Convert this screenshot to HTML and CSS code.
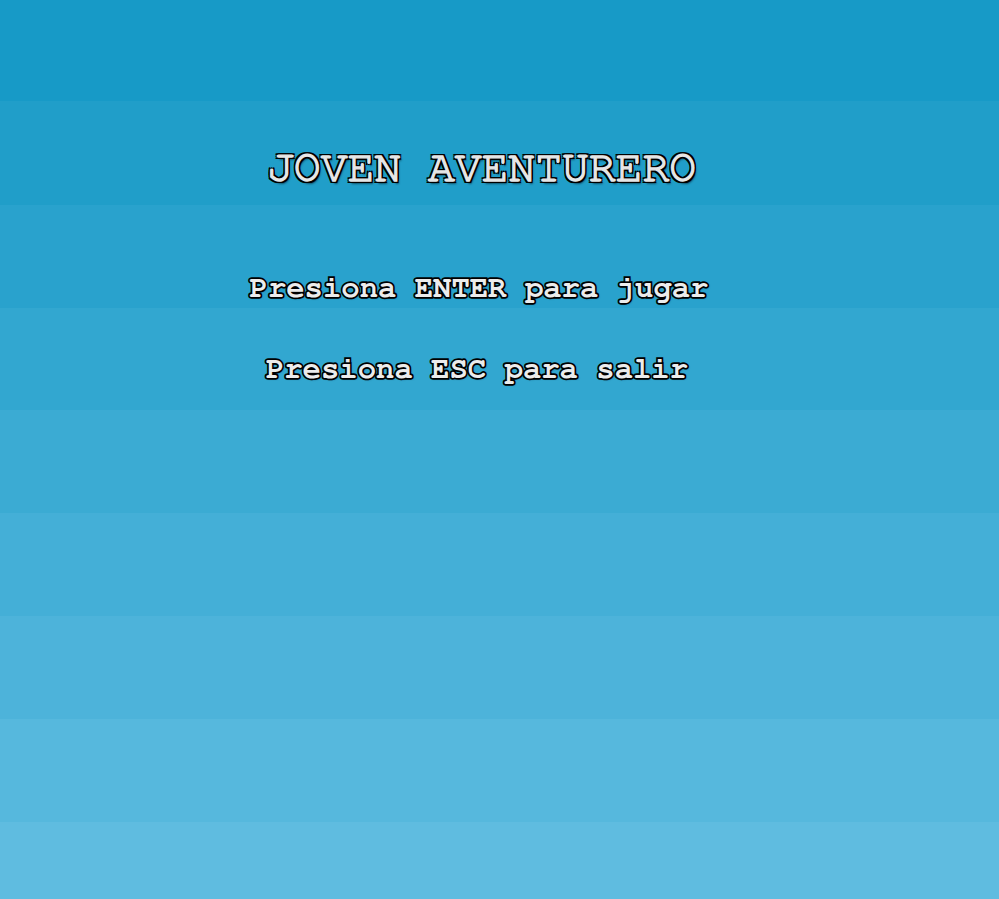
FILE: index.html
```html
<!DOCTYPE html>
<html lang="es">
<head>
<meta charset="utf-8">
<title>Joven Aventurero</title>
<link rel="stylesheet" href="styles.css">
</head>
<body>
<main class="screen">
  <h1 class="title">JOVEN AVENTURERO</h1>
  <p class="hint hint-play">Presiona ENTER para jugar</p>
  <p class="hint hint-exit">Presiona ESC para salir</p>
</main>
</body>
</html>
```
FILE: styles.css
```css
html, body {
  margin: 0;
  padding: 0;
  height: 100%;
}
body {
  background: linear-gradient(to bottom,
    #179ac7 0px, #179ac7 101px,
    #209ec9 101px, #209ec9 205px,
    #29a2cd 205px, #29a2cd 308px,
    #32a7d0 308px, #32a7d0 410px,
    #3babd3 410px, #3babd3 513px,
    #44afd7 513px, #44afd7 616px,
    #4db3da 616px, #4db3da 719px,
    #56b8dd 719px, #56b8dd 822px,
    #5fbce0 822px, #5fbce0 899px);
  background-repeat: no-repeat;
  overflow: hidden;
}
.screen {
  width: 960px;
  display: flex;
  flex-direction: column;
  align-items: center;
  padding-top: 146px;
  font-family: "Nimbus Mono PS", "Nimbus Mono L", "FreeMono", "Courier New", Courier, "Liberation Mono", monospace;
  color: #ececec;
}
.title, .hint {
  margin: 0;
  line-height: 1;
}
.title {
  font-size: 44.7px;
  font-weight: normal;
  margin-left: 3px;
  -webkit-text-stroke: 1.4px #e6e6e6;
  text-shadow:
    2px 0 0 #000, -2px 0 0 #000, 0 2px 0 #000, 0 -2px 0 #000,
    2px 2px 0 #000, -2px 2px 0 #000, 2px -2px 0 #000, -2px -2px 0 #000,
    2px 3px 2px rgba(0, 0, 0, 0.5);
}
.hint {
  font-size: 30.6px;
  font-weight: bold;
  -webkit-text-stroke: 3.4px #000;
  paint-order: stroke fill;
  text-shadow: 1px 1px 2px rgba(0, 0, 0, 0.55);
}
.hint-play {
  margin-top: 82px;
  margin-right: 2px;
}
.hint-exit {
  margin-top: 51px;
  margin-right: 6px;
}
```
